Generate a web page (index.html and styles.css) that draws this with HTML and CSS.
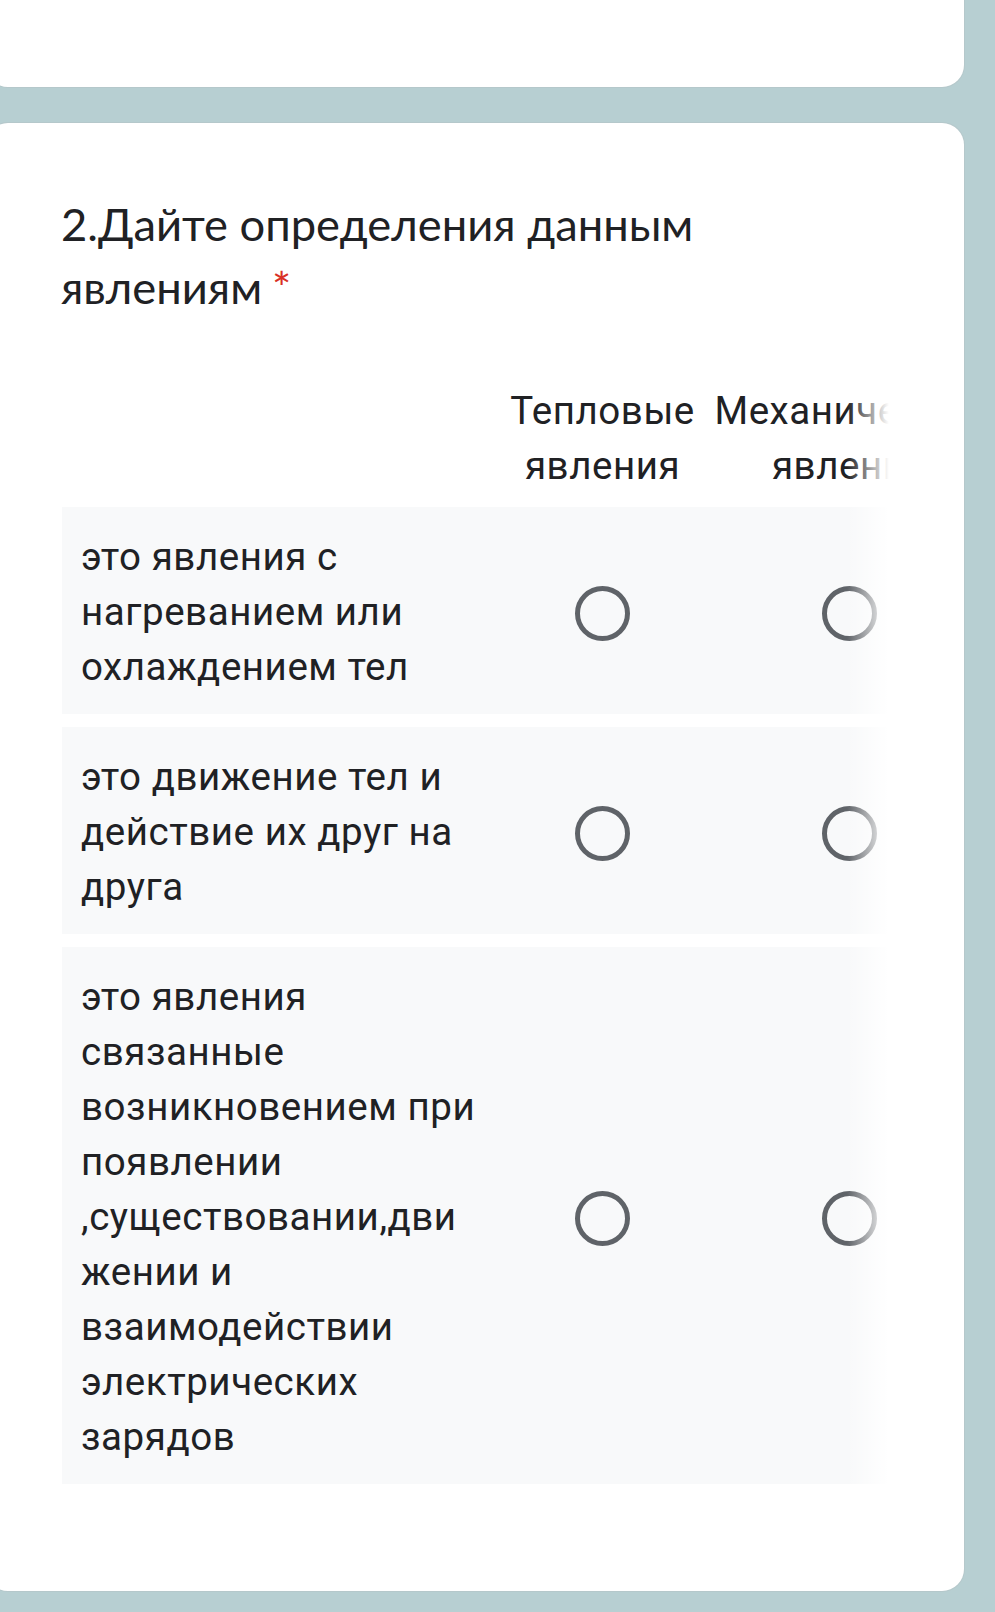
FILE: index.html
```html
<!DOCTYPE html>
<html lang="ru">
<head>
<meta charset="utf-8">
<title>Вопрос 2</title>
<link rel="stylesheet" href="styles.css">
</head>
<body>
  <div class="card card-prev"></div>
  <div class="card card-question">
    <div class="q-title">2.Дайте определения данным явлениям<span class="req">*</span></div>
    <div class="grid-wrap">
      <div class="grid-scroll">
        <div class="grid-row grid-head">
          <div class="cell-label"></div>
          <div class="cell-col"><span class="col-text">Тепловые явления</span></div>
          <div class="cell-col"><span class="col-text">Механические явления</span></div>
        </div>
        <div class="grid-row grid-body">
          <div class="cell-label">это явления с нагреванием или охлаждением тел</div>
          <div class="cell-col"><span class="radio"></span></div>
          <div class="cell-col"><span class="radio"></span></div>
        </div>
        <div class="grid-row grid-body">
          <div class="cell-label">это движение тел и действие их друг на друга</div>
          <div class="cell-col"><span class="radio"></span></div>
          <div class="cell-col"><span class="radio"></span></div>
        </div>
        <div class="grid-row grid-body">
          <div class="cell-label">это явления связанные возникновением при появлении ,существовании,движении и взаимодействии электрических зарядов</div>
          <div class="cell-col"><span class="radio"></span></div>
          <div class="cell-col"><span class="radio"></span></div>
        </div>
      </div>
      <div class="fade"></div>
    </div>
  </div>
</body>
</html>
```

FILE: styles.css
```css
html, body {
  margin: 0;
  padding: 0;
}
body {
  background: #b7cfd2;
  width: 995px;
  height: 1612px;
  overflow: hidden;
  color: #202124;
  font-family: Roboto, "Liberation Sans", sans-serif;
}
.card {
  background: #ffffff;
  margin-left: -14px;
  width: 978px;
  box-sizing: border-box;
  box-shadow: 0 0 0 1px rgba(180, 195, 198, 0.6);
}
.card-prev {
  height: 87px;
  border-radius: 0 0 22px 22px;
}
.card-question {
  margin-top: 36px;
  height: 1468px;
  border-radius: 22px;
  padding: 69px 72px 0 76px;
}
.q-title {
  font-family: Lato, "Open Sans", sans-serif;
  font-size: 45.3px;
  line-height: 63px;
  width: 720px;
  margin-left: -1px;
  color: #202124;
}
.req {
  color: #d93025;
  padding-left: 10px;
}
.grid-wrap {
  position: relative;
  margin-top: 65px;
  width: 829px;
}
.grid-scroll {
  overflow: hidden;
  width: 829px;
}
.grid-row {
  display: grid;
  grid-template-columns: 417px 247px 247px;
  width: 911px;
  font-size: 38.5px;
  line-height: 55px;
  letter-spacing: 0.55px;
}
.grid-head {
  margin-bottom: 14px;
}
.grid-body {
  background: #f8f9fa;
  margin-bottom: 13px;
}
.grid-body .cell-label {
  padding: 22px 2px 20px 19px;
  overflow-wrap: break-word;
  word-break: break-word;
}
.cell-col {
  display: flex;
  justify-content: center;
  align-items: center;
  min-width: 0;
}
.col-text {
  text-align: center;
}
.radio {
  width: 55px;
  height: 55px;
  box-sizing: border-box;
  border: 5px solid #5f6368;
  border-radius: 50%;
  margin-top: 5px;
}
.fade {
  position: absolute;
  top: 0;
  right: 0;
  bottom: 0;
  width: 44px;
  background: linear-gradient(to right, rgba(255, 255, 255, 0), #ffffff 95%);
}
```
